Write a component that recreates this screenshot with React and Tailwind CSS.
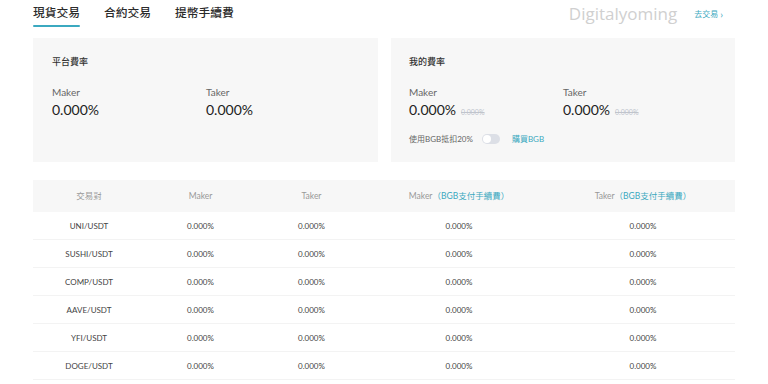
import React from "react";

const F = { fontFamily: 'Lato, "Noto Sans CJK TC", sans-serif' };

const rows = ["UNI/USDT", "SUSHI/USDT", "COMP/USDT", "AAVE/USDT", "YFI/USDT", "DOGE/USDT"];

function Toggle() {
  return (
    <div className="w-[18px] h-[10px] rounded-full bg-[#dcdfe6] relative">
      <div className="absolute left-[1px] top-[1px] w-[8px] h-[8px] rounded-full bg-white" />
    </div>
  );
}

export default function App() {
  return (
    <div className="w-[768px] h-[384px] bg-white overflow-hidden" style={F}>
      <div className="pl-[33px] w-[735px]">
        {/* top bar */}
        <div className="h-[38px] flex items-start justify-between pr-[12px]">
          <div className="flex gap-[24px] pt-[5px]">
            <div className="flex flex-col items-center">
              <span className="text-[11.75px] leading-[16px] font-medium text-[#2b2b2b]">現貨交易</span>
              <div className="mt-[4px] h-[2px] w-[47px] bg-[#3ba9c0] rounded-full" />
            </div>
            <span className="text-[11.75px] leading-[16px] font-medium text-[#2b2b2b]">合約交易</span>
            <span className="text-[11.75px] leading-[16px] font-medium text-[#2b2b2b]">提幣手續費</span>
          </div>
          <div className="flex items-center pt-[2px]">
            <span className="text-[17px] leading-[24px] text-[#d0d0d0]" style={{ fontFamily: '"Open Sans", sans-serif' }}>Digitalyoming</span>
            <span className="ml-[17px] text-[8px] text-[#3ba9c0] flex items-center gap-[2px]">去交易<span className="text-[10px]">›</span></span>
          </div>
        </div>

        {/* cards */}
        <div className="flex gap-[13px]">
          <div className="w-[345px] h-[124px] bg-[#f7f7f7] pl-[19px] pt-[19px]">
            <div className="text-[9px] leading-[10px] text-[#333] font-medium">平台費率</div>
            <div className="flex mt-[19px]">
              <div className="w-[154px]">
                <div className="text-[10px] leading-[12px] text-[#666]">Maker</div>
                <div className="text-[14px] leading-[20px] text-[#222] mt-[2px]">0.000%</div>
              </div>
              <div>
                <div className="text-[10px] leading-[12px] text-[#666]">Taker</div>
                <div className="text-[14px] leading-[20px] text-[#222] mt-[2px]">0.000%</div>
              </div>
            </div>
          </div>
          <div className="w-[344px] h-[124px] bg-[#f7f7f7] pl-[18px] pt-[19px]">
            <div className="text-[9px] leading-[10px] text-[#333] font-medium">我的費率</div>
            <div className="flex mt-[19px]">
              <div className="w-[154px]">
                <div className="text-[10px] leading-[12px] text-[#666]">Maker</div>
                <div className="flex items-baseline mt-[2px]">
                  <span className="text-[14px] leading-[20px] text-[#222]">0.000%</span>
                  <span className="ml-[5px] text-[7px] text-[#c0c4cc] line-through">0.000%</span>
                </div>
              </div>
              <div>
                <div className="text-[10px] leading-[12px] text-[#666]">Taker</div>
                <div className="flex items-baseline mt-[2px]">
                  <span className="text-[14px] leading-[20px] text-[#222]">0.000%</span>
                  <span className="ml-[5px] text-[7px] text-[#c0c4cc] line-through">0.000%</span>
                </div>
              </div>
            </div>
            <div className="flex items-center mt-[13px]">
              <span className="text-[8px] leading-[12px] text-[#666]">使用BGB抵扣20%</span>
              <div className="ml-[9px]"><Toggle /></div>
              <span className="ml-[12px] text-[8px] leading-[12px] text-[#3ba9c0]">購買BGB</span>
            </div>
          </div>
        </div>

        {/* table */}
        <div className="mt-[18px] w-[702px]">
          <div className="grid grid-cols-[112px_111px_111px_184px_184px] h-[32px] bg-[#f7f7f7] items-center text-[8.5px] text-[#999] text-center">
            <div>交易對</div>
            <div>Maker</div>
            <div>Taker</div>
            <div>Maker<span className="text-[#3ba9c0]">（BGB支付手續費）</span></div>
            <div>Taker<span className="text-[#3ba9c0]">（BGB支付手續費）</span></div>
          </div>
          {rows.map((r) => (
            <div key={r} className="grid grid-cols-[112px_111px_111px_184px_184px] h-[28px] items-center text-[8px] text-[#444] text-center border-b border-[#f3f3f3]">
              <div>{r}</div>
              <div>0.000%</div>
              <div>0.000%</div>
              <div>0.000%</div>
              <div>0.000%</div>
            </div>
          ))}
        </div>
      </div>
    </div>
  );
}
